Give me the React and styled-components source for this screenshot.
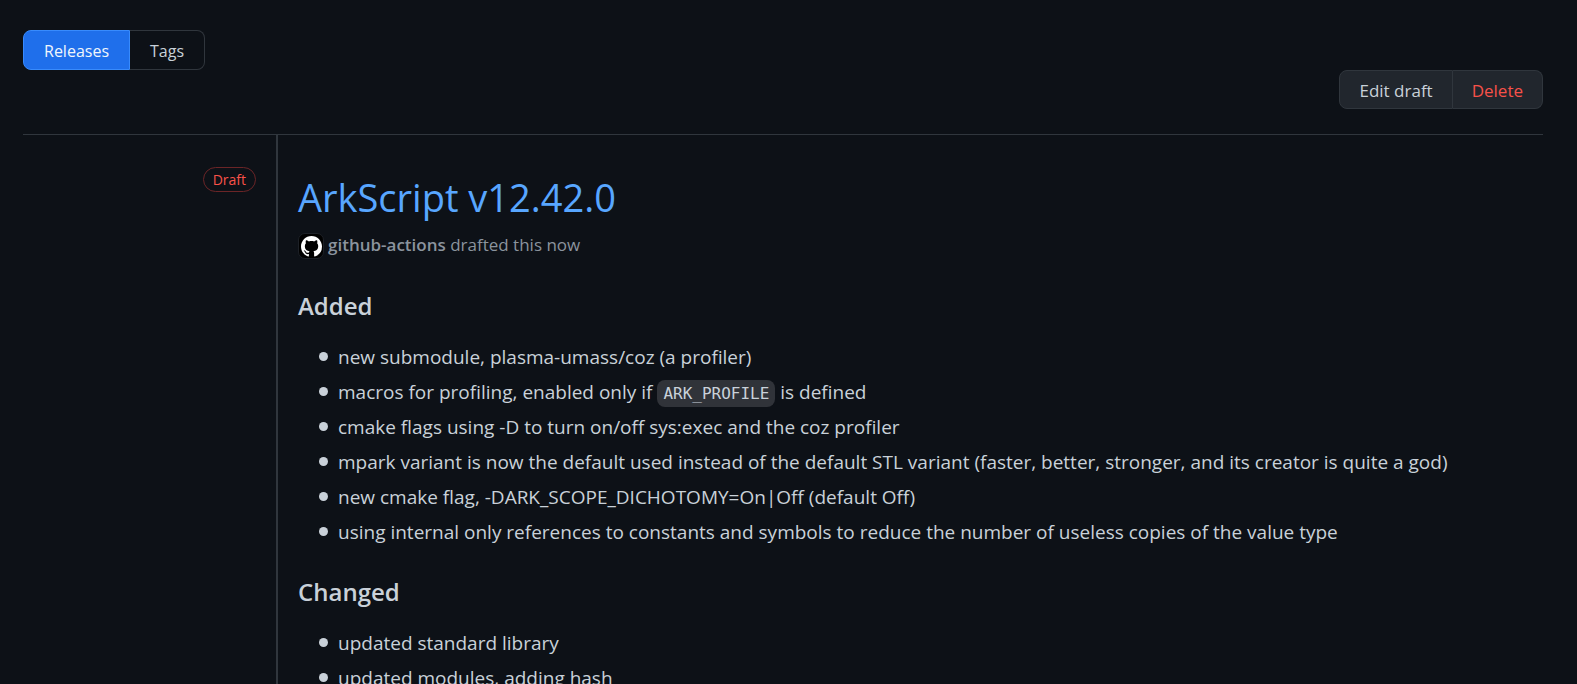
import React from 'react';
import styled, { createGlobalStyle } from 'styled-components';

const GlobalStyle = createGlobalStyle`
  *, *::before, *::after { box-sizing: border-box; }
  body {
    margin: 0;
    background: #0d1117;
    color: #c9d1d9;
    font-family: "Segoe UI", "Open Sans", "Noto Sans", sans-serif;
    font-size: 19px;
    line-height: 30px;
  }
`;

const Page = styled.main`
  display: flex;
  flex-direction: column;
  height: 100vh;
  overflow: hidden;
  padding: 30px 34px 0 23px;
`;

const TabNav = styled.nav`
  display: flex;
`;

const Tab = styled.a`
  padding: 6px 20px 4px;
  border: 1px solid ${(p) => (p.$selected ? '#388bfd' : '#30363d')};
  background: ${(p) => (p.$selected ? '#1f6feb' : 'transparent')};
  color: ${(p) => (p.$selected ? '#f0f6fc' : '#c9d1d9')};
  font-size: 16px;
  line-height: 28px;
  text-decoration: none;

  &:first-child { border-radius: 8px 0 0 8px; }
  &:last-child { border-left: 0; border-radius: 0 8px 8px 0; }
`;

const ActionBar = styled.div`
  display: flex;
  justify-content: flex-end;
  padding-bottom: 25px;
  border-bottom: 1px solid #30363d;
`;

const ActionButton = styled.button`
  padding: 6px 19px 4px;
  border: 1px solid #30363d;
  background: #21262d;
  color: ${(p) => (p.$danger ? '#f85149' : '#c9d1d9')};
  font-family: inherit;
  font-size: 17px;
  line-height: 27px;
  cursor: pointer;

  &:first-child { border-radius: 8px 0 0 8px; }
  &:last-child { border-left: 0; border-radius: 0 8px 8px 0; }
`;

const Release = styled.article`
  display: flex;
  flex: 1;
  min-height: 0;
`;

const Meta = styled.aside`
  display: flex;
  flex: 0 0 253px;
  justify-content: flex-end;
  align-items: flex-start;
  padding: 32px 20px 0 0;
`;

const DraftLabel = styled.span`
  padding: 1px 9px 0;
  border: 1px solid #6b2527;
  border-radius: 13px;
  color: #f85149;
  font-size: 14px;
  line-height: 22px;
`;

const Content = styled.div`
  flex: 1;
  min-width: 0;
  padding: 37px 0 0 20px;
  border-left: 2px solid #30363d;
`;

const Title = styled.h1`
  margin: 0;
  font-size: 38px;
  font-weight: 400;
  line-height: 50px;

  a { color: #58a6ff; text-decoration: none; }
`;

const Byline = styled.p`
  display: flex;
  align-items: flex-start;
  gap: 4px;
  margin: 9px 0 0;
  padding-bottom: 2px;
  color: #8b949e;
  font-size: 17px;
  line-height: 28px;
`;

const Avatar = styled.span`
  display: flex;
  align-items: center;
  justify-content: center;
  width: 26px;
  height: 26px;
  margin-top: 2px;
  border: 1px solid #1c2026;
  border-radius: 7px;
  background: #000;
`;

const Author = styled.a`
  color: inherit;
  font-weight: 600;
  text-decoration: none;
`;

const SectionTitle = styled.h3`
  margin: 29px 0 21px;
  font-size: 24px;
  font-weight: 600;
  line-height: 31px;
`;

const ChangeList = styled.ul`
  display: flex;
  flex-direction: column;
  gap: 5px;
  margin: 0;
  padding: 0 0 0 21px;
  list-style: none;
`;

const Change = styled.li`
  display: flex;
  gap: 10px;

  &::before {
    content: "";
    flex: none;
    width: 9px;
    height: 9px;
    margin-top: 10px;
    border-radius: 50%;
    background: #c9d1d9;
  }
`;

const Code = styled.code`
  padding: 4px 6px;
  border-radius: 8px;
  background: #303339;
  font-family: Consolas, "DejaVu Sans Mono", monospace;
  font-size: 16px;
  line-height: 20px;
`;

const sections = [
  {
    title: 'Added',
    changes: [
      'new submodule, plasma-umass/coz (a profiler)',
      <>macros for profiling, enabled only if <Code>ARK_PROFILE</Code> is defined</>,
      'cmake flags using -D to turn on/off sys:exec and the coz profiler',
      'mpark variant is now the default used instead of the default STL variant (faster, better, stronger, and its creator is quite a god)',
      'new cmake flag, -DARK_SCOPE_DICHOTOMY=On|Off (default Off)',
      'using internal only references to constants and symbols to reduce the number of useless copies of the value type',
    ],
  },
  {
    title: 'Changed',
    changes: ['updated standard library', 'updated modules, adding hash'],
  },
];

function GitHubMark() {
  return (
    <svg width="21" height="21" viewBox="0 0 16 16" fill="#fff" aria-hidden="true">
      <path d="M8 0C3.58 0 0 3.58 0 8c0 3.54 2.29 6.53 5.47 7.59.4.07.55-.17.55-.38 0-.19-.01-.82-.01-1.49-2.01.37-2.53-.49-2.69-.94-.09-.23-.48-.94-.82-1.13-.28-.15-.68-.52-.01-.53.63-.01 1.08.58 1.23.82.72 1.21 1.87.87 2.33.66.07-.52.28-.87.51-1.07-1.78-.2-3.64-.89-3.64-3.95 0-.87.31-1.59.82-2.15-.08-.2-.36-1.02.08-2.12 0 0 .67-.21 2.2.82.64-.18 1.32-.27 2-.27s1.36.09 2 .27c1.53-1.04 2.2-.82 2.2-.82.44 1.1.16 1.92.08 2.12.51.56.82 1.27.82 2.15 0 3.07-1.87 3.75-3.65 3.95.29.25.54.73.54 1.48 0 1.07-.01 1.93-.01 2.2 0 .21.15.46.55.38A8.01 8.01 0 0 0 16 8c0-4.42-3.58-8-8-8Z" />
    </svg>
  );
}

export default function App() {
  return (
    <>
      <GlobalStyle />
      <Page>
        <TabNav aria-label="Releases and tags">
          <Tab href="#releases" $selected aria-current="page">Releases</Tab>
          <Tab href="#tags">Tags</Tab>
        </TabNav>
        <ActionBar>
          <ActionButton type="button">Edit draft</ActionButton>
          <ActionButton type="button" $danger>Delete</ActionButton>
        </ActionBar>
        <Release>
          <Meta>
            <DraftLabel>Draft</DraftLabel>
          </Meta>
          <Content>
            <Title><a href="#release">ArkScript v12.42.0</a></Title>
            <Byline>
              <Avatar><GitHubMark /></Avatar>
              <span><Author href="#author">github-actions</Author> drafted this now</span>
            </Byline>
            {sections.map((section) => (
              <section key={section.title}>
                <SectionTitle>{section.title}</SectionTitle>
                <ChangeList>
                  {section.changes.map((change, i) => (
                    <Change key={i}><span>{change}</span></Change>
                  ))}
                </ChangeList>
              </section>
            ))}
          </Content>
        </Release>
      </Page>
    </>
  );
}
